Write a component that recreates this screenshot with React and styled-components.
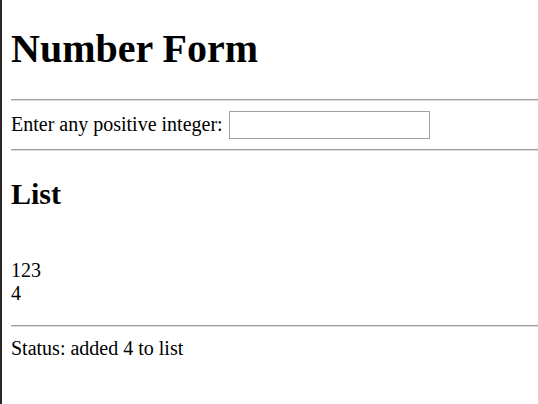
import React from "react";
import styled, { createGlobalStyle } from "styled-components";

const GlobalStyle = createGlobalStyle`
  html, body {
    margin: 0;
    padding: 0;
    background: #ffffff;
  }
  body {
    font-family: "Liberation Serif", "Times New Roman", serif;
    font-size: 20px;
    color: #000000;
  }
`;

const Page = styled.div`
  display: flow-root;
  box-sizing: border-box;
  min-height: 404px;
  border-left: 2px solid #2b2724;
  padding-left: 9px;
`;

const Title = styled.h1`
  font-size: 40px;
  line-height: 46px;
  font-weight: bold;
  margin: 26px 0 27px;
`;

const Rule = styled.hr`
  margin: 10px 0;
  height: 0;
  border: none;
  border-top: 1px solid #9c9c9c;
  border-bottom: 1px solid #dcdcdc;
`;

const FormRow = styled.form`
  display: flex;
  align-items: center;
  height: 28px;
  margin: 0;
`;

const Label = styled.label`
  font-size: 20px;
  line-height: 23px;
  padding-bottom: 2px;
`;

const NumberInput = styled.input`
  box-sizing: border-box;
  width: 201px;
  height: 28px;
  margin: 0 0 0 6px;
  border: 1px solid #a0a0a0;
  padding: 1px 3px;
  font-size: 16px;
  outline: none;
  background: #fff;
`;

const SubTitle = styled.h2`
  font-size: 30px;
  line-height: 35px;
  font-weight: bold;
  margin: 25px 0;
`;

const ListBlock = styled.div`
  margin: 48px 0 20px;
  line-height: 23px;
`;

const ListItem = styled.div``;

const Status = styled.p`
  margin: 10px 0;
  line-height: 23px;
`;

export default function App() {
  const items = [123, 4];
  return (
    <>
      <GlobalStyle />
      <Page>
        <Title>Number Form</Title>
        <Rule />
        <FormRow onSubmit={(e) => e.preventDefault()}>
          <Label htmlFor="num">Enter any positive integer:</Label>
          <NumberInput id="num" type="text" />
        </FormRow>
        <Rule />
        <SubTitle>List</SubTitle>
        <ListBlock>
          {items.map((n) => (
            <ListItem key={n}>{n}</ListItem>
          ))}
        </ListBlock>
        <Rule />
        <Status>Status: added 4 to list</Status>
      </Page>
    </>
  );
}
